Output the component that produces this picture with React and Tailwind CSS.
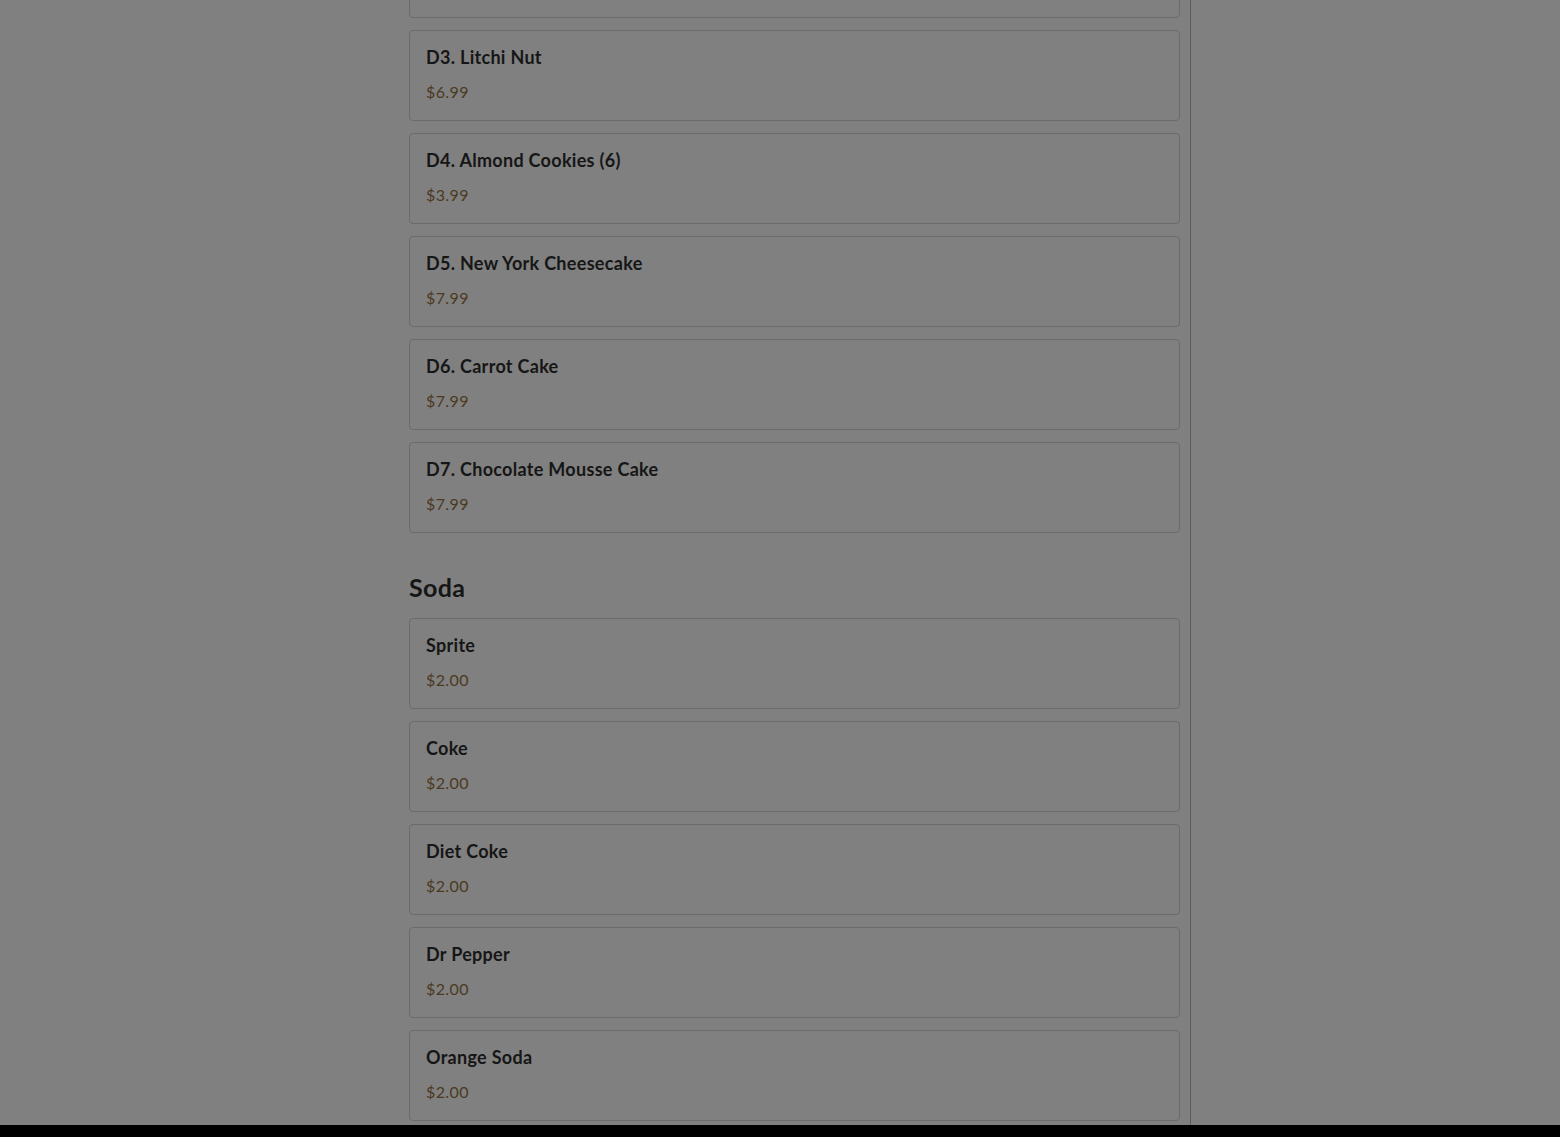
import React from "react";

const desserts = [
  { name: "D3. Litchi Nut", price: "$6.99" },
  { name: "D4. Almond Cookies (6)", price: "$3.99" },
  { name: "D5. New York Cheesecake", price: "$7.99" },
  { name: "D6. Carrot Cake", price: "$7.99" },
  { name: "D7. Chocolate Mousse Cake", price: "$7.99" },
];

const sodas = [
  { name: "Sprite", price: "$2.00" },
  { name: "Coke", price: "$2.00" },
  { name: "Diet Coke", price: "$2.00" },
  { name: "Dr Pepper", price: "$2.00" },
  { name: "Orange Soda", price: "$2.00" },
];

function Card({ item }) {
  return (
    <div className="h-[91px] rounded-[4px] border border-[#6b6b6b] bg-[#808080] pl-4 pr-4 pt-[15px]">
      <div className="text-[18px] leading-[22px] font-bold tracking-[0.3px] text-[#161616]">{item.name}</div>
      <div className="mt-[14px] text-[16px] leading-[20px] tracking-[0.4px] text-[#4b3920]">{item.price}</div>
    </div>
  );
}

export default function App() {
  return (
    <div
      className="h-[1137px] overflow-hidden bg-[#808080]"
      style={{ fontFamily: "Lato, 'Noto Sans', sans-serif" }}
    >
      <div className="ml-[397px] w-[794px] h-full border-r border-[#5c5c5c] pl-3 pr-[10px]">
        <div className="flex flex-col gap-3">
          <div className="-mt-[73px] h-[91px] rounded-[4px] border border-[#6b6b6b] bg-[#808080]" />
          {desserts.map((d) => (
            <Card key={d.name} item={d} />
          ))}
        </div>
        <h2 className="mt-[39px] mb-[16px] text-[25px] leading-[30px] font-bold tracking-[0.3px] text-[#161616]">Soda</h2>
        <div className="flex flex-col gap-3">
          {sodas.map((d) => (
            <Card key={d.name} item={d} />
          ))}
        </div>
      </div>
      <div className="fixed bottom-0 left-0 right-0 h-[12px] bg-black" />
    </div>
  );
}
